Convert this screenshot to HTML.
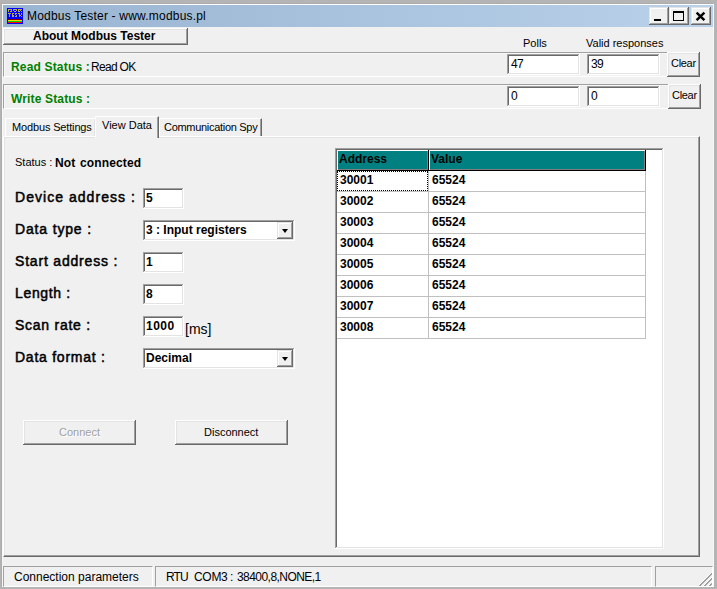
<!DOCTYPE html>
<html><head><meta charset="utf-8"><style>
*{margin:0;padding:0;box-sizing:border-box}
html,body{width:717px;height:589px;overflow:hidden;background:#b4b4b4}
body{position:relative;font-family:"Liberation Sans",sans-serif;font-size:11px;color:#000}
.a{position:absolute;white-space:nowrap}
#win{position:absolute;left:2px;top:4px;width:712px;height:583px;background:#f0f0f0;border:1px solid #f8f8f8;border-top-color:#fff;box-shadow:-1px -1px #acacac}
#title{position:absolute;left:3px;top:5px;width:710px;height:22px;background:linear-gradient(to right,#99b4d1,#b9d1ea)}
.btn{position:absolute;background:#f0f0f0;box-shadow:inset -1px -1px #696969,inset 1px 1px #fff,inset -2px -2px #a0a0a0,inset 2px 2px #e3e3e3;text-align:center}
.cbtn{position:absolute;background:#f0f0f0;box-shadow:inset -1px -1px #696969,inset 1px 1px #e3e3e3,inset -2px -2px #a0a0a0,inset 2px 2px #fff}
.edit{position:absolute;background:#fff;box-shadow:inset -1px -1px #fff,inset 1px 1px #a0a0a0,inset -2px -2px #e3e3e3,inset 2px 2px #696969}
.etch{position:absolute;border-top:1px solid #a0a0a0;border-left:1px solid #a0a0a0;border-bottom:1px solid #fff;border-right:1px solid #fff;box-shadow:inset 1px 1px #f8f8f8}
.green{color:#008000;font-weight:bold;font-size:12px}
.lbl{font-size:14px;-webkit-text-stroke:0.5px #000}
.bold{font-weight:bold;font-size:12px}
.cell{position:absolute;font-weight:bold;font-size:12px}
</style></head><body>
<div id="win"></div>
<div id="title"></div>
<!-- icon -->
<svg class="a" style="left:7px;top:8px" width="16" height="16" viewBox="0 0 16 16" shape-rendering="crispEdges"><rect width="16" height="16" fill="#0000ff"/><rect x="1" y="1" width="4" height="1" fill="#b4ac58"/><rect x="6" y="1" width="4" height="1" fill="#b4ac58"/><rect x="11" y="1" width="4" height="1" fill="#b4ac58"/><rect x="1" y="2" width="1" height="1" fill="#b4ac58"/><rect x="4" y="2" width="1" height="1" fill="#b4ac58"/><rect x="6" y="2" width="1" height="1" fill="#b4ac58"/><rect x="9" y="2" width="1" height="1" fill="#b4ac58"/><rect x="11" y="2" width="1" height="1" fill="#b4ac58"/><rect x="13" y="2" width="1" height="1" fill="#b4ac58"/><rect x="1" y="3" width="1" height="1" fill="#b4ac58"/><rect x="3" y="3" width="2" height="1" fill="#b4ac58"/><rect x="7" y="3" width="2" height="1" fill="#b4ac58"/><rect x="11" y="3" width="2" height="1" fill="#b4ac58"/><rect x="14" y="3" width="1" height="1" fill="#b4ac58"/><rect x="1" y="5" width="3" height="1" fill="#b4ac58"/><rect x="5" y="5" width="2" height="1" fill="#b4ac58"/><rect x="8" y="5" width="2" height="1" fill="#b4ac58"/><rect x="11" y="5" width="2" height="1" fill="#b4ac58"/><rect x="14" y="5" width="1" height="1" fill="#b4ac58"/><rect x="2" y="6" width="1" height="1" fill="#b4ac58"/><rect x="5" y="6" width="1" height="1" fill="#b4ac58"/><rect x="8" y="6" width="1" height="1" fill="#b4ac58"/><rect x="12" y="6" width="1" height="1" fill="#b4ac58"/><rect x="14" y="6" width="1" height="1" fill="#b4ac58"/><rect x="2" y="7" width="1" height="1" fill="#b4ac58"/><rect x="5" y="7" width="2" height="1" fill="#b4ac58"/><rect x="9" y="7" width="1" height="1" fill="#b4ac58"/><rect x="12" y="7" width="2" height="1" fill="#b4ac58"/><rect x="2" y="8" width="1" height="1" fill="#b4ac58"/><rect x="5" y="8" width="2" height="1" fill="#b4ac58"/><rect x="8" y="8" width="2" height="1" fill="#b4ac58"/><rect x="12" y="8" width="1" height="1" fill="#b4ac58"/><rect x="14" y="8" width="1" height="1" fill="#b4ac58"/><rect x="1" y="11" width="14" height="1" fill="#800000"/><rect x="1" y="12" width="14" height="1" fill="#ffd000"/><rect x="1" y="13" width="14" height="1" fill="#00d000"/><rect x="1" y="14" width="14" height="1" fill="#ff0000"/></svg>
<div class="a" style="left:27px;top:9px;font-size:12px;color:#000;letter-spacing:0.2px">Modbus Tester - www.modbus.pl</div>
<!-- caption buttons -->
<div class="cbtn" style="left:649px;top:7px;width:20px;height:18px"><div class="a" style="left:5px;top:12px;width:7px;height:2px;background:#000"></div></div>
<div class="cbtn" style="left:669px;top:7px;width:20px;height:18px"><div class="a" style="left:4px;top:4px;width:11px;height:10px;border:1px solid #000;border-top-width:2px"></div></div>
<div class="cbtn" style="left:691px;top:7px;width:20px;height:18px">
<svg class="a" style="left:4px;top:4px" width="11" height="10" viewBox="0 0 11 10"><path d="M1.6 1.6L9.4 9.2M9.4 1.6L1.6 9.2" stroke="#000" stroke-width="2.4"/></svg></div>

<!-- About -->
<div class="btn" style="left:3px;top:28px;width:185px;height:17px"><div class="a" style="left:30px;top:1px;font-weight:bold;font-size:12px">About Modbus Tester</div></div>
<div class="a" style="left:523px;top:37px">Polls</div>
<div class="a" style="left:586px;top:37px">Valid responses</div>

<!-- read status group -->
<div class="etch" style="left:3px;top:52px;width:666px;height:25px"></div>
<div class="a green" style="left:11px;top:60px;letter-spacing:0.17px">Read Status :</div>
<div class="a" style="left:91px;top:60px;font-size:12px;letter-spacing:-0.7px">Read OK</div>
<div class="edit" style="left:507px;top:54px;width:73px;height:21px"><div class="a" style="left:4px;top:3px;font-size:12px;letter-spacing:-0.6px">47</div></div>
<div class="edit" style="left:587px;top:54px;width:73px;height:21px"><div class="a" style="left:4px;top:3px;font-size:12px;letter-spacing:-0.6px">39</div></div>
<div class="btn" style="left:667px;top:52px;width:33px;height:25px"><div class="a" style="left:4px;top:5px;font-size:11px;letter-spacing:-0.3px">Clear</div></div>

<div class="etch" style="left:3px;top:84px;width:666px;height:25px"></div>
<div class="a green" style="left:11px;top:92px;letter-spacing:0.15px">Write Status :</div>
<div class="edit" style="left:507px;top:86px;width:73px;height:21px"><div class="a" style="left:4px;top:3px;font-size:12px;letter-spacing:-0.6px">0</div></div>
<div class="edit" style="left:587px;top:86px;width:73px;height:21px"><div class="a" style="left:4px;top:3px;font-size:12px;letter-spacing:-0.6px">0</div></div>
<div class="btn" style="left:668px;top:84px;width:33px;height:25px"><div class="a" style="left:4px;top:5px;font-size:11px;letter-spacing:-0.3px">Clear</div></div>

<!-- tabs -->
<div class="a" style="left:3px;top:136px;width:697px;height:421px;border-top:1px solid #fff;border-left:1px solid #fff;border-right:1px solid #696969;border-bottom:1px solid #696969;box-shadow:inset -1px -1px #a0a0a0,inset 1px 1px #e3e3e3"></div>
<div class="a" style="left:5px;top:118px;width:90px;height:18px;border-top:1px solid #fff;border-left:1px solid #fff;border-top-left-radius:1px;box-shadow:inset -1px 0 #e3e3e3"></div>
<div class="a" style="left:12px;top:121px;font-size:11px;letter-spacing:-0.15px">Modbus Settings</div>
<div class="a" style="left:159px;top:118px;width:103px;height:18px;border-top:1px solid #fff;border-left:1px solid #fff;border-right:1px solid #696969;border-top-left-radius:1px;box-shadow:inset -1px 0 #a0a0a0"></div>
<div class="a" style="left:164px;top:121px;font-size:11px;letter-spacing:-0.3px">Communication Spy</div>
<div class="a" style="left:95px;top:116px;width:64px;height:22px;background:#f0f0f0;border-top:1px solid #fff;border-left:1px solid #fff;border-right:1px solid #696969;border-top-left-radius:1px;box-shadow:inset -1px 0 #a0a0a0"></div>
<div class="a" style="left:102px;top:119px;font-size:11px">View Data</div>

<!-- left form -->
<div class="a" style="left:15px;top:156px;font-size:11px">Status :</div>
<div class="a bold" style="left:55px;top:156px;letter-spacing:0.15px;word-spacing:1px">Not connected</div>

<div class="a lbl" style="left:15px;top:189px;letter-spacing:1.04px">Device address :</div>
<div class="a lbl" style="left:15px;top:221px;letter-spacing:0.84px">Data type :</div>
<div class="a lbl" style="left:15px;top:253px;letter-spacing:0.81px">Start address :</div>
<div class="a lbl" style="left:15px;top:285px;letter-spacing:0.66px">Length :</div>
<div class="a lbl" style="left:15px;top:317px;letter-spacing:0.74px">Scan rate :</div>
<div class="a lbl" style="left:15px;top:349px;letter-spacing:0.75px">Data format :</div>

<div class="edit" style="left:143px;top:188px;width:41px;height:21px"><div class="a bold" style="left:3px;top:3px">5</div></div>
<div class="edit" style="left:143px;top:220px;width:152px;height:21px"><div class="a bold" style="left:3px;top:3px">3 : Input registers</div>
<div class="cbtn" style="left:134px;top:2px;width:16px;height:17px"><div class="a" style="left:5px;top:7px;width:0;height:0;border-left:3.5px solid transparent;border-right:3.5px solid transparent;border-top:4px solid #000"></div></div></div>
<div class="edit" style="left:143px;top:252px;width:41px;height:21px"><div class="a bold" style="left:3px;top:3px">1</div></div>
<div class="edit" style="left:143px;top:284px;width:41px;height:21px"><div class="a bold" style="left:3px;top:3px">8</div></div>
<div class="edit" style="left:143px;top:316px;width:41px;height:21px"><div class="a bold" style="left:3px;top:3px;letter-spacing:0.5px">1000</div></div>
<div class="a" style="left:185px;top:321px;font-size:14px">[ms]</div>
<div class="edit" style="left:143px;top:348px;width:152px;height:21px"><div class="a bold" style="left:3px;top:3px">Decimal</div>
<div class="cbtn" style="left:134px;top:2px;width:16px;height:17px"><div class="a" style="left:5px;top:7px;width:0;height:0;border-left:3.5px solid transparent;border-right:3.5px solid transparent;border-top:4px solid #000"></div></div></div>

<div class="btn" style="left:23px;top:420px;width:113px;height:25px"><div class="a" style="left:36px;top:6px;color:#a0a0a0;text-shadow:1px 1px #fff">Connect</div></div>
<div class="btn" style="left:175px;top:420px;width:113px;height:25px"><div class="a" style="left:29px;top:6px">Disconnect</div></div>

<!-- grid -->
<div class="edit" style="left:335px;top:148px;width:329px;height:401px"></div>
<div id="grid" class="a" style="left:0;top:0">
<div class="a" style="left:337px;top:150px;width:92px;height:21px;background:#008080;box-shadow:inset -1px -1px #000,inset 1px 1px #fff,inset -2px -2px #808080"></div>
<div class="a" style="left:429px;top:150px;width:217px;height:21px;background:#008080;box-shadow:inset -1px -1px #000,inset 1px 1px #fff,inset -2px -2px #808080"></div>
<div class="cell" style="left:339px;top:152px">Address</div>
<div class="cell" style="left:431px;top:152px">Value</div>
<div class="a" style="left:428px;top:171px;width:1px;height:168px;background:#c0c0c0"></div>
<div class="a" style="left:645px;top:171px;width:1px;height:168px;background:#c0c0c0"></div>
<div class="a" style="left:337px;top:191px;width:309px;height:1px;background:#c0c0c0"></div>
<div class="cell" style="left:340px;top:173px">30001</div>
<div class="cell" style="left:432px;top:173px">65524</div>
<div class="a" style="left:337px;top:212px;width:309px;height:1px;background:#c0c0c0"></div>
<div class="cell" style="left:340px;top:194px">30002</div>
<div class="cell" style="left:432px;top:194px">65524</div>
<div class="a" style="left:337px;top:233px;width:309px;height:1px;background:#c0c0c0"></div>
<div class="cell" style="left:340px;top:215px">30003</div>
<div class="cell" style="left:432px;top:215px">65524</div>
<div class="a" style="left:337px;top:254px;width:309px;height:1px;background:#c0c0c0"></div>
<div class="cell" style="left:340px;top:236px">30004</div>
<div class="cell" style="left:432px;top:236px">65524</div>
<div class="a" style="left:337px;top:275px;width:309px;height:1px;background:#c0c0c0"></div>
<div class="cell" style="left:340px;top:257px">30005</div>
<div class="cell" style="left:432px;top:257px">65524</div>
<div class="a" style="left:337px;top:296px;width:309px;height:1px;background:#c0c0c0"></div>
<div class="cell" style="left:340px;top:278px">30006</div>
<div class="cell" style="left:432px;top:278px">65524</div>
<div class="a" style="left:337px;top:317px;width:309px;height:1px;background:#c0c0c0"></div>
<div class="cell" style="left:340px;top:299px">30007</div>
<div class="cell" style="left:432px;top:299px">65524</div>
<div class="a" style="left:337px;top:338px;width:309px;height:1px;background:#c0c0c0"></div>
<div class="cell" style="left:340px;top:320px">30008</div>
<div class="cell" style="left:432px;top:320px">65524</div>
<div class="a" style="left:337px;top:171px;width:91px;height:20px;border:1px dotted #000"></div>
</div>

<!-- status bar -->
<div class="a" style="left:3px;top:566px;width:150px;height:21px;border-top:1px solid #a0a0a0;border-left:1px solid #a0a0a0;border-right:1px solid #fff;border-bottom:1px solid #fff"></div>
<div class="a" style="left:14px;top:570px;font-size:12px">Connection parameters</div>
<div class="a" style="left:155px;top:566px;width:497px;height:21px;border-top:1px solid #a0a0a0;border-left:1px solid #a0a0a0;border-right:1px solid #fff;border-bottom:1px solid #fff"></div>
<div class="a" style="left:166px;top:570px;font-size:12px;letter-spacing:-0.9px">RTU</div><div class="a" style="left:194px;top:570px;font-size:12px;letter-spacing:-0.3px">COM3</div><div class="a" style="left:230px;top:570px;font-size:12px">:</div><div class="a" style="left:237px;top:570px;font-size:12px;letter-spacing:-0.55px">38400,8,NONE,1</div>
<div class="a" style="left:655px;top:566px;width:58px;height:21px;border-top:1px solid #a0a0a0;border-left:1px solid #a0a0a0;border-right:1px solid #fff;border-bottom:1px solid #fff"></div>
<svg class="a" style="left:699px;top:573px" width="13" height="13" shape-rendering="crispEdges"><rect x="0" y="11" width="1" height="1" fill="#fff"/><rect x="0" y="12" width="1" height="1" fill="#a0a0a0"/><rect x="1" y="10" width="1" height="1" fill="#fff"/><rect x="1" y="11" width="1" height="1" fill="#a0a0a0"/><rect x="1" y="12" width="1" height="1" fill="#a0a0a0"/><rect x="2" y="9" width="1" height="1" fill="#fff"/><rect x="2" y="10" width="1" height="1" fill="#a0a0a0"/><rect x="2" y="11" width="1" height="1" fill="#a0a0a0"/><rect x="3" y="8" width="1" height="1" fill="#fff"/><rect x="3" y="9" width="1" height="1" fill="#a0a0a0"/><rect x="3" y="10" width="1" height="1" fill="#a0a0a0"/><rect x="4" y="7" width="1" height="1" fill="#fff"/><rect x="4" y="8" width="1" height="1" fill="#a0a0a0"/><rect x="4" y="9" width="1" height="1" fill="#a0a0a0"/><rect x="4" y="12" width="1" height="1" fill="#fff"/><rect x="5" y="6" width="1" height="1" fill="#fff"/><rect x="5" y="7" width="1" height="1" fill="#a0a0a0"/><rect x="5" y="8" width="1" height="1" fill="#a0a0a0"/><rect x="5" y="11" width="1" height="1" fill="#fff"/><rect x="5" y="12" width="1" height="1" fill="#a0a0a0"/><rect x="6" y="5" width="1" height="1" fill="#fff"/><rect x="6" y="6" width="1" height="1" fill="#a0a0a0"/><rect x="6" y="7" width="1" height="1" fill="#a0a0a0"/><rect x="6" y="10" width="1" height="1" fill="#fff"/><rect x="6" y="11" width="1" height="1" fill="#a0a0a0"/><rect x="6" y="12" width="1" height="1" fill="#a0a0a0"/><rect x="7" y="4" width="1" height="1" fill="#fff"/><rect x="7" y="5" width="1" height="1" fill="#a0a0a0"/><rect x="7" y="6" width="1" height="1" fill="#a0a0a0"/><rect x="7" y="9" width="1" height="1" fill="#fff"/><rect x="7" y="10" width="1" height="1" fill="#a0a0a0"/><rect x="7" y="11" width="1" height="1" fill="#a0a0a0"/><rect x="8" y="3" width="1" height="1" fill="#fff"/><rect x="8" y="4" width="1" height="1" fill="#a0a0a0"/><rect x="8" y="5" width="1" height="1" fill="#a0a0a0"/><rect x="8" y="8" width="1" height="1" fill="#fff"/><rect x="8" y="9" width="1" height="1" fill="#a0a0a0"/><rect x="8" y="10" width="1" height="1" fill="#a0a0a0"/><rect x="9" y="2" width="1" height="1" fill="#fff"/><rect x="9" y="3" width="1" height="1" fill="#a0a0a0"/><rect x="9" y="4" width="1" height="1" fill="#a0a0a0"/><rect x="9" y="7" width="1" height="1" fill="#fff"/><rect x="9" y="8" width="1" height="1" fill="#a0a0a0"/><rect x="9" y="9" width="1" height="1" fill="#a0a0a0"/><rect x="9" y="12" width="1" height="1" fill="#fff"/><rect x="10" y="1" width="1" height="1" fill="#fff"/><rect x="10" y="2" width="1" height="1" fill="#a0a0a0"/><rect x="10" y="3" width="1" height="1" fill="#a0a0a0"/><rect x="10" y="6" width="1" height="1" fill="#fff"/><rect x="10" y="7" width="1" height="1" fill="#a0a0a0"/><rect x="10" y="8" width="1" height="1" fill="#a0a0a0"/><rect x="10" y="11" width="1" height="1" fill="#fff"/><rect x="10" y="12" width="1" height="1" fill="#a0a0a0"/><rect x="11" y="0" width="1" height="1" fill="#fff"/><rect x="11" y="1" width="1" height="1" fill="#a0a0a0"/><rect x="11" y="2" width="1" height="1" fill="#a0a0a0"/><rect x="11" y="5" width="1" height="1" fill="#fff"/><rect x="11" y="6" width="1" height="1" fill="#a0a0a0"/><rect x="11" y="7" width="1" height="1" fill="#a0a0a0"/><rect x="11" y="10" width="1" height="1" fill="#fff"/><rect x="11" y="11" width="1" height="1" fill="#a0a0a0"/><rect x="11" y="12" width="1" height="1" fill="#a0a0a0"/><rect x="12" y="0" width="1" height="1" fill="#a0a0a0"/><rect x="12" y="1" width="1" height="1" fill="#a0a0a0"/><rect x="12" y="4" width="1" height="1" fill="#fff"/><rect x="12" y="5" width="1" height="1" fill="#a0a0a0"/><rect x="12" y="6" width="1" height="1" fill="#a0a0a0"/><rect x="12" y="9" width="1" height="1" fill="#fff"/><rect x="12" y="10" width="1" height="1" fill="#a0a0a0"/><rect x="12" y="11" width="1" height="1" fill="#a0a0a0"/></svg>
</body></html>
